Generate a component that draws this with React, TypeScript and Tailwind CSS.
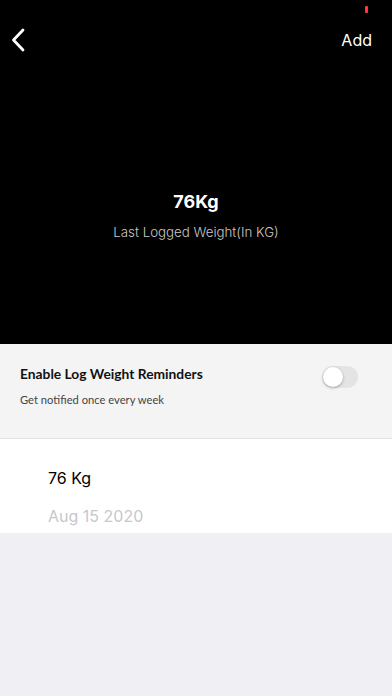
import React from "react";

export default function App() {
  return (
    <div className="w-[392px] h-[696px] flex flex-col bg-[#efeff4] overflow-hidden" style={{ fontFamily: "Lato, 'Open Sans', sans-serif" }}>
      <div className="h-[344px] bg-black flex flex-col relative">
        <div className="absolute left-[365px] top-[6px] w-[3px] h-[7px] bg-[#ff3b30] rounded-[1px]" />
        <div className="h-[80px] flex items-center justify-between pl-[10px] pr-[20px]">
          <svg width="18" height="26" viewBox="0 0 18 26" fill="none">
            <path d="M13 3 L3.5 13 L13 23" stroke="white" strokeWidth="2.8" strokeLinecap="round" strokeLinejoin="round" />
          </svg>
          <span className="text-white text-[16px]" style={{ fontFamily: "Inter, sans-serif" }}>Add</span>
        </div>
        <div className="flex flex-col items-center mt-[108px]">
          <span className="text-white text-[18px] font-bold leading-[28px]" style={{ fontFamily: "Inter, sans-serif" }}>76Kg</span>
          <span className="text-[#c8c8c8] text-[13.3px] font-light mt-[7px]" style={{ fontFamily: "Inter, sans-serif" }}>Last Logged Weight(In KG)</span>
        </div>
      </div>
      <div className="h-[95px] bg-[#f4f4f4] border-b border-[#e2e2e2] flex items-start justify-between pl-[20px] pr-[34px] pt-[21px]">
        <div className="flex flex-col">
          <span className="text-[13.8px] font-bold text-[#111] leading-[18px]">Enable Log Weight Reminders</span>
          <span className="text-[11.2px] text-[#444] mt-[9px]">Get notified once every week</span>
        </div>
        <div className="w-[36px] h-[22px] rounded-full bg-[#e4e4e4] mt-[1px] relative">
          <div className="absolute left-[1px] top-[1px] w-[20px] h-[20px] rounded-full bg-white shadow-[0_1px_3px_rgba(0,0,0,0.3)]" />
        </div>
      </div>
      <div className="h-[94px] bg-white flex flex-col pl-[48px] pt-[28px]" style={{ fontFamily: "Inter, sans-serif" }}>
        <span className="text-[16px] text-black leading-[22px]">76 Kg</span>
        <span className="text-[16px] text-[#c7c7cc] leading-[22px] mt-[16px]">Aug 15 2020</span>
      </div>
    </div>
  );
}
